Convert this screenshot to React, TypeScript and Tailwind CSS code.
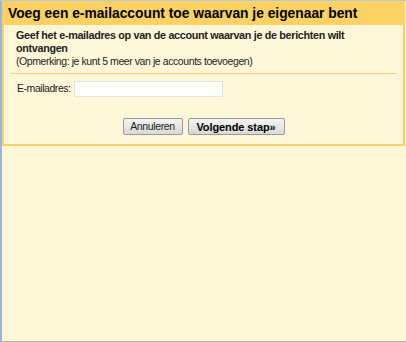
import React from 'react';

export default function App() {
    return (
        <div className="w-[406px] h-[342px] flex flex-col bg-[#fff7d7] overflow-hidden" style={{ fontFamily: '"Liberation Sans", Arial, sans-serif' }}>
            <div className="h-px bg-[#b9c7d6]" />
            <div className="flex flex-1">
                <div className="w-[2px] bg-[#9db6d3]" />
                <div className="flex-1 flex flex-col">
                    <div className="border-2 border-[#fad163] mr-[1px]">
                        <div className="bg-[#fad163] h-[22px] px-[4px] flex items-center">
                            <h2 className="text-[13.8px] font-bold text-black">Voeg een e-mailaccount toe waarvan je eigenaar bent</h2>
                        </div>
                        <div className="px-[6px] pt-[4px] pb-[9px]">
                            <div className="px-[6px] leading-[13px] text-[#222]">
                                <p className="font-bold text-[10.8px] tracking-[-0.33px] max-w-[340px]">Geef het e-mailadres op van de account waarvan je de berichten wilt ontvangen</p>
                                <p className="text-[10.5px] tracking-[-0.42px]">(Opmerking: je kunt 5 meer van je accounts toevoegen)</p>
                            </div>
                            <div className="h-px bg-[#fad163] mt-[5px] mb-[7px]" />
                            <div className="flex items-center gap-[4px] pl-[7px] text-[10.5px] tracking-[-0.45px] text-[#222]">
                                <label className="w-[53px] shrink-0 whitespace-nowrap">E-mailadres:</label>
                                <input type="text" className="w-[149px] h-[16px] bg-white border border-[#e3e3e3] outline-none" />
                            </div>
                            <div className="flex justify-center gap-[5px] mt-[21px]">
                                <button className="w-[60px] h-[17px] text-[10.5px] tracking-[-0.35px] text-[#222] border border-[#999] rounded-[2px] bg-gradient-to-b from-[#f5f5f5] to-[#d8d8d8]">Annuleren</button>
                                <button className="w-[97px] h-[17px] text-[11px] tracking-[-0.1px] font-bold text-black border border-[#999] rounded-[2px] bg-gradient-to-b from-[#f5f5f5] to-[#d8d8d8]">Volgende stap»</button>
                            </div>
                        </div>
                    </div>
                    <div className="flex-1" />
                </div>
            </div>
            <div className="h-px bg-[#b4b4b4]" />
        </div>
    );
}
